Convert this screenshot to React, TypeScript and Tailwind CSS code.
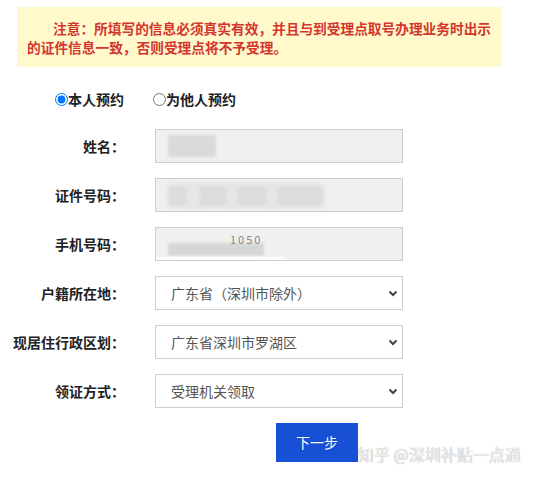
import React from "react";

const font = { fontFamily: '"Noto Sans CJK SC", "Noto Sans", sans-serif' };

function Chevron() {
  return (
    <svg width="10" height="7" viewBox="0 0 10 7" className="absolute left-[232px] top-[13px]">
      <path d="M1.5 1.5 L5 5 L8.5 1.5" fill="none" stroke="#444" strokeWidth="2" />
    </svg>
  );
}

function Label({ children }: { children: React.ReactNode }) {
  return (
    <div className="w-[125px] text-right text-[14px] font-bold text-[#222] leading-[34px]">{children}</div>
  );
}

function TextBox({ children }: { children?: React.ReactNode }) {
  return (
    <div className="relative ml-[30px] w-[248px] h-[34px] bg-[#f0f0f0] border border-[#cdcdcd] overflow-hidden">
      {children}
    </div>
  );
}

function SelectBox({ text }: { text: string }) {
  return (
    <div className="relative ml-[30px] w-[248px] h-[34px] bg-white border border-[#cdcdcd] pl-[15px] text-[14px] leading-[32px] text-[#555] whitespace-nowrap">
      {text}
      <Chevron />
    </div>
  );
}

export default function App() {
  return (
    <div className="relative w-[538px] h-[479px] bg-white overflow-hidden pt-[7px]" style={font}>
      <div className="ml-[17px] w-[485px] h-[60px] bg-[#fff9cc] px-[10px] pt-[12px] text-[13.7px] leading-[19px] font-bold text-[#d4362e] whitespace-nowrap">
        <div className="pl-[26px]">注意：所填写的信息必须真实有效，并且与到受理点取号办理业务时出示</div>
        <div>的证件信息一致，否则受理点将不予受理。</div>
      </div>

      <div className="mt-[22px] h-[20px] pl-[55px] flex items-center text-[14px] font-semibold text-[#222]">
        <label className="flex items-center">
          <input type="radio" name="who" defaultChecked className="m-0 w-[13px] h-[13px]" />
          <span>本人预约</span>
        </label>
        <label className="flex items-center ml-[29px]">
          <input type="radio" name="who" className="m-0 w-[13px] h-[13px]" />
          <span>为他人预约</span>
        </label>
      </div>

      <div className="mt-[20px] flex flex-col gap-[15px]">
        <div className="flex items-center h-[34px]">
          <Label>姓名：</Label>
          <TextBox>
            <div className="absolute left-[12px] top-[5px] w-[48px] h-[22px] bg-[#d9d9d9] blur-[1.5px]" />
          </TextBox>
        </div>
        <div className="flex items-center h-[34px]">
          <Label>证件号码：</Label>
          <TextBox>
            <div className="absolute left-[12px] top-[6px] w-[156px] h-[22px] bg-[#dcdcdc] blur-[2px]" />
            <div className="absolute left-[30px] top-[6px] w-[14px] h-[22px] bg-[#e6e6e6] blur-[2px]" />
            <div className="absolute left-[70px] top-[6px] w-[12px] h-[22px] bg-[#e6e6e6] blur-[2px]" />
            <div className="absolute left-[110px] top-[6px] w-[12px] h-[22px] bg-[#e6e6e6] blur-[2px]" />
          </TextBox>
        </div>
        <div className="flex items-center h-[34px]">
          <Label>手机号码：</Label>
          <TextBox>
            <div className="absolute left-[12px] top-[15px] w-[96px] h-[13px] bg-[#d6d6d6] blur-[1.5px]" />
            <div className="absolute left-[74px] top-[5px] text-[11px] leading-[12px] text-[#888] tracking-[2px]">1050</div>
            <div className="absolute left-[-10px] top-[29px] w-[140px] h-[8px] bg-white rounded-full blur-[1px]" />
          </TextBox>
        </div>
        <div className="flex items-center h-[34px]">
          <Label>户籍所在地：</Label>
          <SelectBox text="广东省（深圳市除外）" />
        </div>
        <div className="flex items-center h-[34px]">
          <Label>现居住行政区划：</Label>
          <SelectBox text="广东省深圳市罗湖区" />
        </div>
        <div className="flex items-center h-[34px]">
          <Label>领证方式：</Label>
          <SelectBox text="受理机关领取" />
        </div>
      </div>

      <button className="mt-[15px] ml-[276px] w-[82px] h-[39px] bg-[#1750d4] text-white text-[14px] flex items-center justify-center">
        下一步
      </button>

      <div
        className="absolute left-[358px] top-[444px] text-[16px] leading-[20px] text-[#ececec] whitespace-nowrap"
        style={{ textShadow: "0 0 1px #a0a0a0" }}
      >
        知乎 @深圳补贴一点通
      </div>
    </div>
  );
}
